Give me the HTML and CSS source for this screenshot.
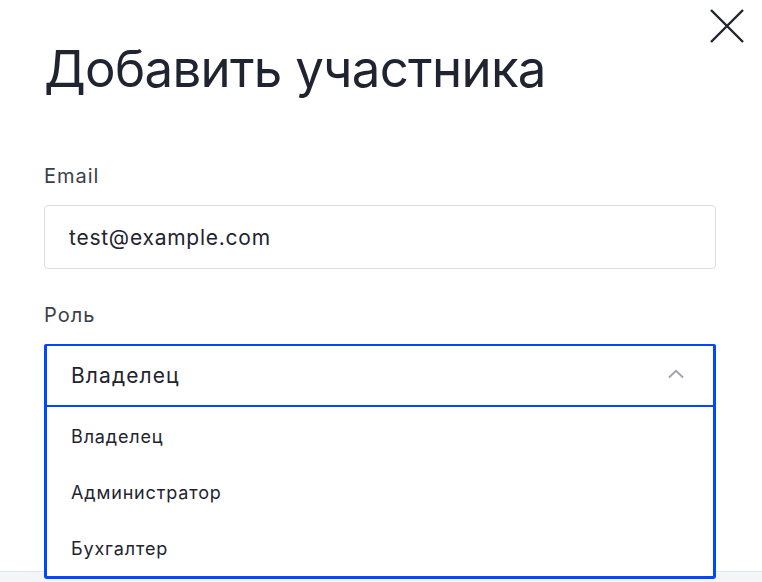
FILE: index.html
```html
<!DOCTYPE html>
<html lang="ru">
<head>
<meta charset="utf-8">
<link rel="stylesheet" href="styles.css">
</head>
<body>
<div class="modal">
  <button class="close" aria-label="Закрыть">
    <svg width="36" height="36" viewBox="0 0 36 36"><path d="M2 2L34 34M34 2L2 34" stroke="#1f2430" stroke-width="2.4" fill="none"/></svg>
  </button>
  <h1 class="title">Добавить участника</h1>
  <div class="field">
    <label class="label">Email</label>
    <div class="input">test@example.com</div>
  </div>
  <div class="field field-role">
    <label class="label">Роль</label>
    <div class="select-wrap">
      <div class="select">
        <span>Владелец</span>
        <svg class="chev" width="16" height="10" viewBox="0 0 16 10"><path d="M1 8.5L8 1.8L15 8.5" stroke="#9ca3af" stroke-width="1.8" fill="none"/></svg>
      </div>
      <ul class="menu">
        <li>Владелец</li>
        <li>Администратор</li>
        <li>Бухгалтер</li>
      </ul>
    </div>
  </div>
</div>
<div class="footer"><span class="footer-text">Внизу</span></div>
</body>
</html>
```

FILE: styles.css
```css
* { box-sizing: border-box; }
html, body { margin: 0; padding: 0; background: #fff; }
body {
  font-family: Inter, "Noto Sans", sans-serif;
  color: #1f2430;
  height: 582px;
  overflow: hidden;
  display: flex;
  flex-direction: column;
}
.modal {
  position: relative;
  padding: 38px 46px 0 44px;
  height: 571px;
  flex: none;
}
.close {
  position: absolute;
  top: 8px;
  right: 17px;
  width: 36px;
  height: 36px;
  padding: 0;
  border: 0;
  background: none;
  display: flex;
}
.title {
  margin: 0 0 64px 0;
  font-size: 51px;
  font-weight: 400;
  line-height: 62px;
  letter-spacing: -0.7px;
  color: #1f2430;
}
.field { display: flex; flex-direction: column; }
.label {
  font-size: 20px;
  line-height: 24px;
  letter-spacing: 1px;
  color: #3a404c;
  margin-bottom: 17px;
}
.input {
  height: 64px;
  border: 1px solid #dcdee2;
  border-radius: 4px;
  padding: 0 24px;
  display: flex;
  align-items: center;
  font-size: 21px;
  letter-spacing: 0.75px;
  color: #1f2430;
}
.field-role { margin-top: 34px; }
.select-wrap { position: relative; }
.select {
  height: 63px;
  border: solid #0047ff;
  border-width: 2px 3px 2px 3px;
  border-radius: 2px;
  padding: 0 29px 0 24px;
  display: flex;
  align-items: center;
  justify-content: space-between;
  font-size: 21px;
  letter-spacing: 1.1px;
  color: #1f2430;
}
.chev { margin-top: -3px; }
.menu {
  position: absolute;
  left: 0;
  right: 0;
  top: 61px;
  margin: 0;
  padding: 1px 0 0 0;
  list-style: none;
  background: #fff;
  border: solid #0047ff;
  border-width: 2px 3px 3px 3px;
  border-radius: 0 0 3px 3px;
  height: 174px;
  z-index: 2;
}
.menu li {
  height: 56px;
  display: flex;
  align-items: center;
  padding-left: 24px;
  font-size: 18px;
  letter-spacing: 0.85px;
  color: #1f2430;
}
.footer {
  flex: none;
  height: 40px;
  background: #f4f5f7;
  border-top: 1px solid #e3e5e8;
  display: flex;
  justify-content: center;
  padding-top: 6px;
}
.footer-text {
  font-size: 20px;
  font-weight: 600;
  color: #c9ccd2;
}
```
